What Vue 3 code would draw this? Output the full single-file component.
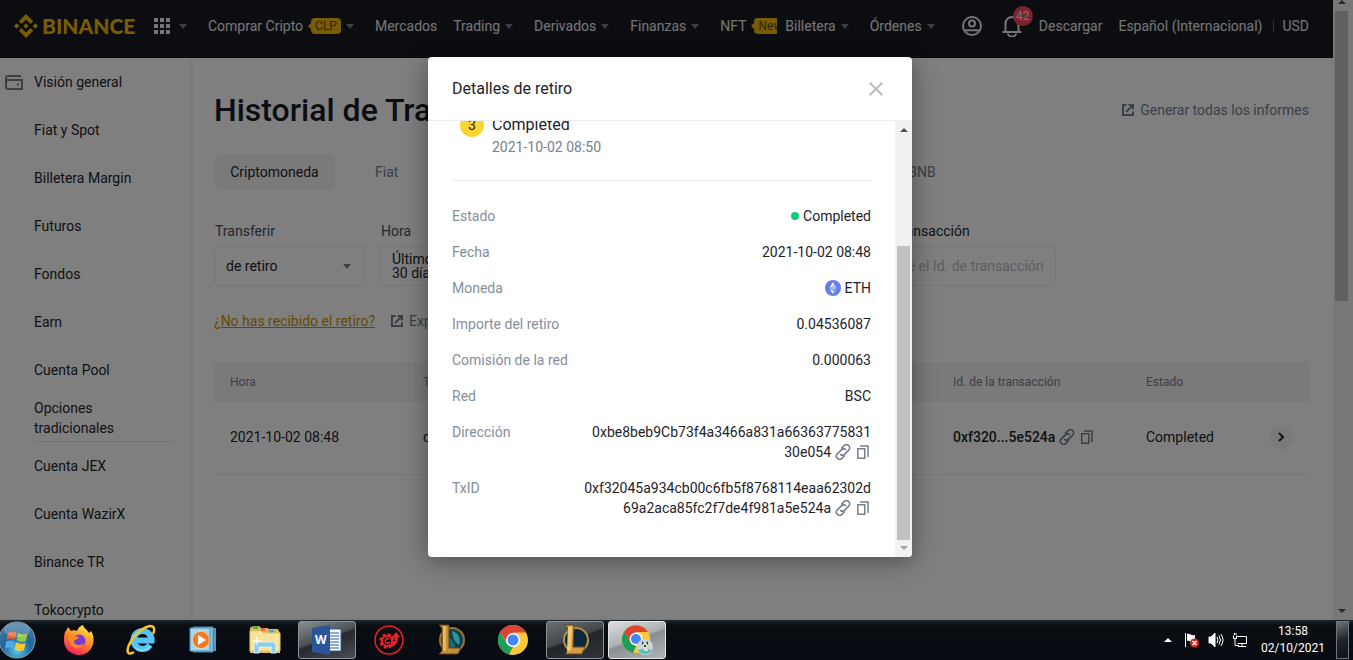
<script setup>
const leftNav = [
  { label: 'Comprar Cripto', badge: 'CLP', caret: true },
  { label: 'Mercados' },
  { label: 'Trading', caret: true },
  { label: 'Derivados', caret: true },
  { label: 'Finanzas', caret: true },
  { label: 'NFT', badge: 'New', cut: true },
  { label: 'Billetera', caret: true },
  { label: 'Órdenes', caret: true },
]
const sideNav = [
  { label: 'Visión general', icon: true },
  { label: 'Fiat y Spot' },
  { label: 'Billetera Margin' },
  { label: 'Futuros' },
  { label: 'Fondos' },
  { label: 'Earn' },
  { label: 'Cuenta Pool' },
  { label: 'Opciones tradicionales', line: true },
  { label: 'Cuenta JEX' },
  { label: 'Cuenta WazirX' },
  { label: 'Binance TR' },
  { label: 'Tokocrypto' },
]
const details = [
  { label: 'Estado', lines: ['Completed'], kind: 'status' },
  { label: 'Fecha', lines: ['2021-10-02 08:48'] },
  { label: 'Moneda', lines: ['ETH'], kind: 'coin' },
  { label: 'Importe del retiro', lines: ['0.04536087'] },
  { label: 'Comisión de la red', lines: ['0.000063'] },
  { label: 'Red', lines: ['BSC'] },
  { label: 'Dirección', lines: ['0xbe8beb9Cb73f4a3466a831a66363775831', '30e054'], kind: 'hash' },
  { label: 'TxID', lines: ['0xf32045a934cb00c6fb5f8768114eaa62302d', '69a2aca85fc2f7de4f981a5e524a'], kind: 'hash' },
]
const linkPath = 'M9.8 7.6l3.6-3.6a4 4 0 0 1 5.7 5.7l-5 5a4 4 0 0 1-5.7 0M14.2 16.4l-3.6 3.6a4 4 0 0 1-5.7-5.7l5-5a4 4 0 0 1 5.7 0'
</script>

<template>
  <div class="desktop">
    <div class="browser">
      <div class="page">
        <header class="topbar">
          <a class="logo" href="#" aria-label="Binance">
            <svg width="24" height="24" viewBox="0 0 24 24" fill="#f0b90b">
              <path d="M12 0l7.2 7.2-2.7 2.7L12 5.4 7.5 9.9 4.8 7.2zM2.7 9.3L5.4 12l-2.7 2.7L0 12zM21.3 9.3L24 12l-2.7 2.7-2.7-2.7zM12 9.3l2.7 2.7-2.7 2.7L9.3 12zM7.5 14.1l4.5 4.5 4.5-4.5 2.7 2.7L12 24l-7.2-7.2z" />
            </svg>
            <span>BINANCE</span>
          </a>
          <button class="apps" aria-label="Productos">
            <svg width="16" height="16" viewBox="0 0 16 16" fill="currentColor">
              <path d="M0 0h4v4H0zM6 0h4v4H6zM12 0h4v4h-4zM0 6h4v4H0zM6 6h4v4H6zM12 6h4v4h-4zM0 12h4v4H0zM6 12h4v4H6zM12 12h4v4h-4z" />
            </svg>
            <i class="caret"></i>
          </button>
          <nav class="nav">
            <a v-for="n in leftNav" :key="n.label" href="#" :class="{ cut: n.cut }">
              {{ n.label }}<span v-if="n.badge" class="badge"><b>{{ n.badge }}</b></span><i v-if="n.caret" class="caret"></i>
            </a>
          </nav>
          <div class="account">
            <button aria-label="Cuenta">
              <svg width="22" height="22" viewBox="0 0 22 22" fill="none" stroke="currentColor" stroke-width="2">
                <circle cx="11" cy="11" r="9" /><circle cx="11" cy="8.6" r="3" /><path d="M5.500 16.500v-1.200h11v1.200" />
              </svg>
            </button>
            <button class="bell" aria-label="Notificaciones">
              <svg width="22" height="22" viewBox="0 0 22 22" fill="none" stroke="currentColor" stroke-width="2">
                <path d="M1.500 17h19M4.500 17V8.500a6.500 6.500 0 0 1 13 0V17M7 18.500a4 3 0 0 0 8 0" />
              </svg>
              <span class="count">42</span>
            </button>
            <a href="#">Descargar</a>
            <a href="#" class="lang">Español (Internacional)</a>
            <a href="#" class="currency">USD</a>
          </div>
        </header>

        <div class="content">
          <aside class="side">
            <a v-for="s in sideNav" :key="s.label" href="#" :class="{ line: s.line }">
              <svg v-if="s.icon" width="18" height="15" viewBox="0 0 18 15" fill="none" stroke="#76808f" stroke-width="2">
                <path d="M16 1H3a2 2 0 0 0-2 2v9a2 2 0 0 0 2 2h14V5H1" /><path d="M12 9.500h2" />
              </svg>
              <span>{{ s.label }}</span>
            </a>
          </aside>

          <main class="main">
            <div class="heading">
              <h1>Historial de Transacciones</h1>
              <a href="#" class="muted">
                <svg width="12" height="12" viewBox="0 0 12 12" fill="none" stroke="currentColor" stroke-width="2"><path d="M4.500 1H1v10h10V7.500M6.500 1H11v4.500M11 1L4 8" /></svg>
                Generar todas los informes
              </a>
            </div>
            <div class="tabs">
              <button class="active">Criptomoneda</button>
              <button>Fiat</button>
              <button class="bnb">BNB</button>
            </div>
            <div class="filters">
              <div class="field">
                <label for="kind">Transferir</label>
                <div class="selectbox">
                  <select id="kind"><option>de retiro</option></select><i class="caret"></i>
                </div>
              </div>
              <div class="field time">
                <label for="time">Hora</label>
                <button id="time" class="period">Últimos<br />30 días</button>
              </div>
              <div class="field tx">
                <label for="tx">Id. de transacción</label>
                <input id="tx" type="text" placeholder="Ingrese el Id. de transacción" />
              </div>
            </div>
            <div class="links">
              <a href="#" class="missing">¿No has recibido el retiro?</a>
              <a href="#" class="muted">
                <svg width="12" height="12" viewBox="0 0 12 12" fill="none" stroke="currentColor" stroke-width="2"><path d="M4.500 1H1v10h10V7.500M6.500 1H11v4.500M11 1L4 8" /></svg>
                Exportar
              </a>
            </div>
            <table>
              <colgroup><col class="c1" /><col /><col class="c1" /><col class="c4" /></colgroup>
              <thead>
                <tr><th>Hora</th><th>Tipo</th><th>Id. de la transacción</th><th>Estado</th></tr>
              </thead>
              <tbody>
                <tr>
                  <td>2021-10-02 08:48</td>
                  <td>de retiro</td>
                  <td>
                    <div class="hash strong">0xf320...5e524a
                      <svg width="16" height="16" viewBox="2 2 20 20" fill="none" stroke="#76808f" stroke-width="2"><path :d="linkPath" /></svg>
                      <svg width="16" height="16" viewBox="0 0 16 16" fill="none" stroke="#76808f" stroke-width="1.500"><path d="M2.750 4.750h7v9.500h-7z" /><path d="M5 2h8v11" /></svg>
                    </div>
                  </td>
                  <td>
                    <div class="state">Completed
                      <button aria-label="Ver detalles">
                        <svg width="8" height="10" viewBox="0 0 8 10" fill="none" stroke="#1e2329" stroke-width="2"><path d="M2 1l4 4-4 4" /></svg>
                      </button>
                    </div>
                  </td>
                </tr>
              </tbody>
            </table>
          </main>
        </div>
      </div>
      <div class="pagebar"><i class="up"></i><div class="thumb"></div><i class="down"></i></div>

      <div class="overlay">
        <section class="modal" role="dialog" aria-labelledby="dlg">
          <header>
            <h2 id="dlg">Detalles de retiro</h2>
            <button aria-label="Cerrar">
              <svg width="14" height="14" viewBox="0 0 14 14" fill="none" stroke="#b7bdc6" stroke-width="2"><path d="M.7.7l12.600 12.600M13.300.7L.7 13.300" /></svg>
            </button>
          </header>
          <div class="body">
            <div class="scroll">
              <div class="step">
                <span class="num">3</span>
                <div><strong>Completed</strong><time>2021-10-02 08:50</time></div>
              </div>
              <dl>
                <div v-for="d in details" :key="d.label" class="row">
                  <dt>{{ d.label }}</dt>
                  <dd>
                    <div v-for="(l, i) in d.lines" :key="l" class="val">
                      <i v-if="d.kind === 'status'" class="dot"></i>
                      <svg v-if="d.kind === 'coin'" width="16" height="16" viewBox="0 0 16 16">
                        <circle cx="8" cy="8" r="8" fill="#627eea" /><path d="M8 2v4.500L11.700 8z" fill="#c5d0f8" /><path d="M8 2L4.300 8 8 6.300z" fill="#fff" /><path d="M8 6.300L4.300 8 8 10.300 11.700 8z" fill="#a8b8f3" /><path d="M8 11v3l3.700-5.200z" fill="#b4c2f5" /><path d="M8 14v-3L4.300 8.800z" fill="#fff" />
                      </svg>
                      <span>{{ l }}</span>
                      <template v-if="d.kind === 'hash' && i === 1">
                        <button aria-label="Abrir enlace"><svg width="16" height="16" viewBox="2 2 20 20" fill="none" stroke="#76808f" stroke-width="2"><path :d="linkPath" /></svg></button>
                        <button aria-label="Copiar"><svg width="16" height="16" viewBox="0 0 16 16" fill="none" stroke="#76808f" stroke-width="1.500"><path d="M2.750 4.750h7v9.500h-7z" /><path d="M5 2h8v11" /></svg></button>
                      </template>
                    </div>
                  </dd>
                </div>
              </dl>
            </div>
            <div class="modalbar"><i class="up"></i><div class="thumb"></div><i class="down"></i></div>
          </div>
        </section>
      </div>
    </div>

    <footer class="taskbar">
      <button class="start" aria-label="Inicio">
        <svg width="36" height="38" viewBox="0 0 36 38">
          <defs>
            <radialGradient id="orb" cx=".5" cy=".8" r=".8"><stop offset="0" stop-color="#58c8ee" /><stop offset=".5" stop-color="#20659b" /><stop offset="1" stop-color="#4a7ba0" /></radialGradient>
          </defs>
          <circle cx="17" cy="19" r="18" fill="url(#orb)" stroke="#8aa3b5" />
          <path d="M8 12c3-2 6-1.500 8.500-.5L15 18.500c-3-1.500-5.500-1-8.500 0z" fill="#f0622b" />
          <path d="M18 12c3 1.500 6 2 9.500.5L26 20c-3 1.500-6 .8-9.500-1z" fill="#94cb3d" />
          <path d="M6 20.500c3-1.200 5.500-1.200 8.500.2L13 27.500c-2.500-1.200-5-1.500-8 .2z" fill="#4fa6e8" />
          <path d="M16 21.500c3 1.500 6 2 9.500.5L24 29c-3 1.500-6 1-9.500-.8z" fill="#fcc92d" />
          <ellipse cx="17" cy="9" rx="13" ry="7" fill="#fff" opacity=".22" />
        </svg>
      </button>
      <div class="apps-row">
        <button aria-label="Firefox">
          <svg width="32" height="32" viewBox="0 0 32 32">
            <defs><linearGradient id="fx" x1=".8" y1="0" x2=".3" y2="1"><stop offset="0" stop-color="#fff14f" /><stop offset=".45" stop-color="#ff9427" /><stop offset="1" stop-color="#f5195f" /></linearGradient></defs>
            <path d="M2 8c1-1 2-3 3-5l3 4c2-1 4-1 6 0 1-3 3-5 6-6 1 4 4 4 6 8l2-2c3 5 3 9 2 13-2 7-7 11-14 11S2 26 1 18c0-4 0-7 1-10z" fill="url(#fx)" />
            <circle cx="16" cy="17" r="6.500" fill="#7c3bd0" /><path d="M5 11c5-1 6 2 11 2-1 3-5 2-5 5 1 4 7 4 10 1-1 5-9 7-13 2-2-3-3-6-3-10z" fill="#ff8a25" />
          </svg>
        </button>
        <button aria-label="Internet Explorer">
          <svg width="32" height="32" viewBox="0 0 32 32" fill="none">
            <path d="M25 21a9 9 0 1 1 1.500-4.500H9" stroke="#55c4f5" stroke-width="6" /><path d="M25 22a9.500 9.500 0 0 1-15 1" stroke="#b5ecff" stroke-width="1" />
            <path d="M9 28c-6 4-8 0-5-7C8 12 18 3 25 2c5 0 5 4 3 8" stroke="#f5c52b" stroke-width="2.500" />
          </svg>
        </button>
        <button aria-label="Reproductor multimedia">
          <svg width="28" height="28" viewBox="0 0 28 28">
            <path d="M7 2h20v23H7z" fill="#4c9ac5" /><path d="M4 1h20v25H4z" fill="#8cc6e2" stroke="#3a83ac" /><path d="M1 2h20v23H1z" fill="#a9d5e8" stroke="#4b8eb0" /><circle cx="12" cy="14" r="8.500" fill="#f47a20" stroke="#fff" stroke-opacity=".4" /><path d="M9 9l8 5-8 5z" fill="#fff" />
          </svg>
        </button>
        <button aria-label="Explorador">
          <svg width="32" height="32" viewBox="0 0 32 32">
            <path d="M1 4l3-2h6l2 2h6l2 1h9l2 4v20H1z" fill="#dcb95c" /><path d="M4 2h5v3H4z" fill="#47b749" /><path d="M12 4h4v3h-4z" fill="#e26a42" /><path d="M20 6h5v3h-5z" fill="#4ba3df" /><path d="M1 7h11l2 2h17v18H1z" fill="#f7e39c" stroke="#e6c869" /><path d="M5 29v-7q0-4 4-4h14q4 0 4 4v7h-5v-6H10v6z" fill="#8ecdea" stroke="#d8f3fd" /><path d="M8 11l1 5 5 1-5 1-1 5-1-5-5-1 5-1z" fill="#fff" opacity=".8" />
          </svg>
        </button>
        <button class="open" aria-label="Word">
          <svg width="32" height="32" viewBox="0 0 32 32">
            <path d="M17 5h13v22H17z" fill="#fff" stroke="#2a5699" /><path d="M18 9h10M18 12h10M18 15h10M18 18h10M18 21h10M18 24h10" stroke="#2a5699" /><path d="M1 4l18-3v30L1 28z" fill="#2a5699" />
            <text x="4" y="20" font-family="Open Sans, sans-serif" font-size="12" font-weight="700" fill="#fff">W</text>
          </svg>
        </button>
        <button aria-label="Garena">
          <svg width="32" height="32" viewBox="0 0 32 32" fill="none" stroke="#ed2024">
            <circle cx="16" cy="16" r="14" stroke-width="1.500" /><circle cx="14" cy="17" r="6.500" stroke-width="2.500" stroke-dasharray="3 2.100" /><circle cx="14" cy="17" r="5" stroke-width="2" /><path d="M16 15.500a2.200 2.200 0 1 0 0 3h-2" stroke-width="1.500" /><path d="M16 21c5 0 6-3 6-8h-3l4-5 4 5h-2c0 7-4 10-9 10z" fill="#ed2024" stroke="none" />
          </svg>
        </button>
        <button aria-label="League of Legends">
          <svg width="32" height="32" viewBox="0 0 32 32">
            <circle cx="17" cy="16" r="12" fill="#123f4d" stroke="#98763a" stroke-width="2" /><path d="M17 7c7 2 9 8 7 14-3-3-6-4-7-14z" fill="#31929a" /><path d="M13 12c4 4 8 7 7 13h-7z" fill="#1b6676" /><path d="M4 1h10v23h12l-3 6H4l3-3V4z" fill="#c28d38" stroke="#5e421a" /><path d="M8 2h3v25H8z" fill="#e4b85c" />
          </svg>
        </button>
        <button aria-label="Chrome">
          <svg width="32" height="32" viewBox="0 0 32 32">
            <circle cx="16" cy="16" r="15" fill="#fbc83c" /><path d="M3 8.500A15 15 0 0 1 29 8.500H16L10 19z" fill="#dc4437" /><path d="M3 8.500L10 20l6 3-4 7.500A15 15 0 0 1 3 8.500z" fill="#1c9f58" /><circle cx="16" cy="16" r="7" fill="#fff" /><circle cx="16" cy="16" r="5.500" fill="#4486f4" />
          </svg>
        </button>
        <button class="open dark" aria-label="Cliente de League of Legends">
          <svg width="32" height="32" viewBox="0 0 32 32">
            <circle cx="17" cy="16" r="12" fill="#0b2739" stroke="#b69049" stroke-width="2" /><path d="M5 1h10l-1 22h12l-3 7H6l3-3V4z" fill="#d29b3f" stroke="#69491b" /><path d="M9 3l4-1-1 24-4 2z" fill="#efca70" />
          </svg>
        </button>
        <button class="open current" aria-label="Ventana de Chrome">
          <svg width="32" height="32" viewBox="0 0 32 32">
            <circle cx="15" cy="15" r="14" fill="#fbc83c" /><path d="M3 8A14 14 0 0 1 27 8H15L9 18z" fill="#dc4437" /><path d="M3 8l7 11 5 3-3 7A14 14 0 0 1 3 8z" fill="#1c9f58" /><circle cx="15" cy="15" r="6.500" fill="#fff" /><circle cx="15" cy="15" r="5" fill="#4486f4" />
            <circle cx="24" cy="23" r="8" fill="#c8d4df" /><path d="M17 26q7-2 14 0a8 8 0 0 1-14 0z" fill="#4bc0bd" /><path d="M21 17l2 2h2l2-2v4l-1 2 1 4h-4l-1-5z" fill="#e8dfc9" /><path d="M21 17l2 2-2 2zM27 17l-2 2 2 2zM23 21h2v2h-2z" fill="#3d3a38" />
          </svg>
        </button>
      </div>
      <div class="tray">
        <button aria-label="Iconos ocultos"><svg width="8" height="4" viewBox="0 0 8 4"><path d="M0 4l4-4 4 4z" fill="#fff" /></svg></button>
        <button aria-label="Centro de actividades">
          <svg width="16" height="16" viewBox="0 0 16 16"><path d="M1 1h1v14H1zM3 2c3-1 4 2 8 1v7c-4 1-5-2-8-1z" fill="#fff" /><circle cx="10.500" cy="11" r="4.500" fill="#d8261f" /><path d="M8.500 9l4 4M12.500 9l-4 4" stroke="#fff" stroke-width="1.500" /></svg>
        </button>
        <button aria-label="Volumen">
          <svg width="16" height="16" viewBox="0 0 16 16" fill="none" stroke="#fff"><path d="M1 5h2l4-4v14l-4-4H1z" fill="#fff" /><path d="M9 5q2 3 0 6M11 3.500q3 4.500 0 9M13 2q4 6 0 12" /></svg>
        </button>
        <button aria-label="Red">
          <svg width="16" height="16" viewBox="0 0 16 16" fill="none" stroke="#fff"><path d="M5 4.500h9.500v7H5.500M1.500 3.500v3h3v-3M2.500 3V1M4 3V1M3 6.500v7h4M10 12v2M6 14.500h8" /></svg>
        </button>
        <div class="clock"><span>13:58</span><span>02/10/2021</span></div>
        <button class="peek" aria-label="Mostrar escritorio"></button>
      </div>
    </footer>
  </div>
</template>

<style>
body { background: #0a0e13; }
</style>

<style scoped>
* { box-sizing: border-box; }
.desktop { display: flex; flex-direction: column; height: 100vh; overflow: hidden; font: 14px/20px Roboto, "Liberation Sans", sans-serif; color: #1e2329; }
button { border: 0; padding: 0; background: none; font: inherit; color: inherit; display: flex; align-items: center; justify-content: center; }
a { color: inherit; text-decoration: none; }
svg { display: block; flex: none; }
h1, h2, dl, dd { margin: 0; }
.browser { flex: 1; min-height: 0; display: flex; position: relative; overflow: hidden; background: #fff; }
.page { flex: 1; min-width: 0; display: flex; flex-direction: column; }
.caret { display: inline-block; flex: none; border: 4px solid transparent; border-top: 5px solid #76808f; border-bottom: 0; }

.topbar { height: 58px; flex: none; display: flex; align-items: center; padding: 0 24px 6px 14px; background: #181a20; color: #eaecef; white-space: nowrap; }
.logo { display: flex; align-items: center; gap: 4px; width: 140px; color: #f0b90b; font: 900 21px/24px Lato, sans-serif; }
.apps { gap: 9px; width: 54px; justify-content: flex-start; }
.nav { display: flex; gap: 16px; }
.nav a { display: flex; align-items: center; }
.nav .caret { margin: 0 5px; }
.cut { width: 57px; margin-right: -8px; overflow: hidden; }
.badge { margin-left: 6px; padding-left: 2px; position: relative; }
.badge b { display: block; background: #f0b90b; color: #5b4a12; border-radius: 4px; font-weight: 400; font-size: 12px; line-height: 16px; padding: 0 4px; }
.badge::before { content: ""; position: absolute; left: -1px; top: 5px; border: 3px solid transparent; border-right-color: #f0b90b; border-left: 0; }
.account { margin-left: auto; display: flex; align-items: center; gap: 16px; }
.bell { position: relative; margin-left: 2px; }
.count { position: absolute; left: 12px; top: -9px; width: 20px; height: 20px; border-radius: 50%; background: #f6465d; font-size: 12px; line-height: 20px; text-align: center; }
.lang { min-width: 147px; }
.currency { display: flex; align-items: center; }
.currency::before { content: ""; height: 12px; border-left: 1px solid #5e6673; margin: 0 8px 0 -8px; }

.content { flex: 1; min-height: 0; display: flex; }
.side { width: 191px; flex: none; border-right: 1px solid #f0f0f0; box-shadow: 0 0 3px rgba(0, 0, 0, .12); overflow: hidden; }
.side a { display: flex; align-items: center; height: 48px; margin: 0 17px 0 34px; }
.side svg { margin: 0 11px 0 -29px; }
.side .line { border-bottom: 1px solid #dfe1e5; }
.side .line span { width: 100px; }

.main { flex: 1; min-width: 0; padding: 32px 24px 0 23px; }
.heading { display: flex; justify-content: space-between; align-items: center; height: 40px; }
h1 { font-size: 32px; line-height: 40px; font-weight: 500; color: #181a20; }
.muted { display: flex; align-items: center; gap: 6px; color: #76808f; }
.tabs { display: flex; margin-top: 24px; color: #76808f; }
.tabs button { height: 36px; padding: 0 16px; border-radius: 8px; }
.tabs .active { background: #f5f5f5; color: #1e2329; width: 121px; margin-right: 24px; }
.tabs .bnb { margin-left: 478px; }
.filters { display: flex; margin-top: 32px; color: #474d57; }
.field { width: 150px; margin-right: 16px; }
.field label { display: block; line-height: 18px; padding-left: 1px; margin-bottom: 6px; }
.selectbox { display: flex; align-items: center; height: 40px; border: 1px solid #eaecef; border-radius: 4px; padding: 0 12px 0 11px; }
select { appearance: none; flex: 1; border: 0; background: none; font: inherit; color: #1e2329; padding: 0; }
.period { width: 150px; height: 40px; justify-content: flex-start; text-align: left; border: 1px solid #eaecef; border-radius: 4px; padding: 0 11px; line-height: 14px; color: #1e2329; }
.tx { width: 200px; margin-left: 310px; }
.tx label { color: #1e2329; padding-left: 3px; }
input { display: block; width: 100%; height: 40px; border: 1px solid #eaecef; border-radius: 4px; padding: 0 12px; font: inherit; background: none; }
input::placeholder { color: #b7bdc6; }
.links { display: flex; align-items: center; gap: 16px; margin-top: 24px; height: 22px; }
.missing { color: #c99400; text-decoration: underline; }
table { width: 100%; margin-top: 30px; border-collapse: collapse; table-layout: fixed; }
.c1 { width: 193px; }
.c4 { width: 179px; }
th { height: 40px; padding: 0 16px; background: #f5f5f5; font-weight: 400; font-size: 12px; text-align: left; color: #76808f; }
td { height: 72px; padding: 0 16px 2px; border-bottom: 1px solid #eaecef; }
.hash { display: flex; align-items: center; gap: 4px; white-space: nowrap; }
.strong { font-weight: 500; }
.state { display: flex; align-items: center; justify-content: space-between; }
.state button { width: 24px; height: 24px; border-radius: 50%; background: #f5f5f5; }

.pagebar { width: 20px; padding: 0 5px 6px 2px; background: #f1f1f1; display: flex; flex-direction: column; align-items: center; }
.up, .down { flex: none; border: 4px solid transparent; }
.up { border-top: 0; border-bottom-color: #505050; }
.down { border-bottom: 0; border-top-color: #505050; margin-top: auto; }
.pagebar .thumb { width: 100%; height: 290px; margin-top: 7px; background: #c1c1c1; }

.overlay { position: absolute; inset: 0; display: flex; align-items: center; justify-content: center; padding: 0 13px 5px 0; background: rgba(0, 0, 0, .5); }
.modal { width: 484px; height: 500px; display: flex; flex-direction: column; background: #fff; border-radius: 4px; overflow: hidden; box-shadow: 0 4px 24px rgba(0, 0, 0, .4); }
.modal header { flex: none; height: 64px; display: flex; align-items: center; justify-content: space-between; padding: 0 29px 0 24px; border-bottom: 1px solid #eaecef; }
h2 { font-size: 16px; line-height: 24px; font-weight: 400; }
.body { flex: 1; min-height: 0; display: flex; }
.scroll { flex: 1; min-width: 0; overflow: hidden; padding: 0 24px; }
.step { display: flex; gap: 8px; margin-top: -8px; padding: 0 8px 23px; border-bottom: 1px solid #eaecef; }
.num { width: 24px; height: 24px; border-radius: 50%; background: #fcd535; text-align: center; line-height: 24px; }
.step strong { display: block; font-size: 16px; line-height: 24px; font-weight: 400; }
.step time { display: block; color: #76808f; }
dl { padding-top: 25px; }
.row { display: flex; justify-content: space-between; margin-bottom: 16px; }
dt { color: #848e9c; }
.val { display: flex; align-items: center; justify-content: flex-end; gap: 4px; height: 20px; }
.val button { width: 16px; height: 16px; }
.dot { width: 8px; height: 8px; border-radius: 50%; background: #0ecb81; }
.modalbar { width: 17px; flex: none; display: flex; flex-direction: column; align-items: center; padding: 7px 2px 7px; background: #f1f1f1; }
.modalbar .thumb { width: 13px; height: 294px; margin-top: auto; background: #c1c1c1; }
.modalbar .down { margin-top: 6px; border-top-color: #a3a3a3; }

.taskbar { flex: none; height: 41px; display: flex; align-items: center; background: linear-gradient(#20272d, #0a0e13 5px, #080c12); border-top: 1px solid #6d7880; color: #fff; overflow: hidden; }
.start { width: 50px; justify-content: flex-start; }
.apps-row { display: flex; gap: 4px; }
.apps-row button { width: 58px; height: 38px; border-radius: 3px; }
.apps-row .open { border: 1px solid #8d9499; background: linear-gradient(160deg, #8a8f93, #4b5055 45%, #25292e 50%, #4a4e52); }
.apps-row .dark { background: linear-gradient(160deg, #6c7176, #42474c 45%, #20252a 50%, #2f3439); }
.apps-row .current { border-color: #e4e6e7; background: linear-gradient(160deg, #dcdedf, #aeb1b3 45%, #8b8e90 50%, #b0b2b4); }
.tray { margin-left: auto; display: flex; align-items: center; gap: 8px; padding-right: 4px; }
.tray button:first-child { margin-right: 4px; }
.clock { width: 74px; margin-right: -2px; display: flex; flex-direction: column; align-items: center; font-size: 12px; line-height: 17px; }
.tray .peek { width: 13px; height: 38px; border: 1px solid #6d7880; background: linear-gradient(160deg, #6c7176, #20252a 50%, #0e1216); }
</style>
